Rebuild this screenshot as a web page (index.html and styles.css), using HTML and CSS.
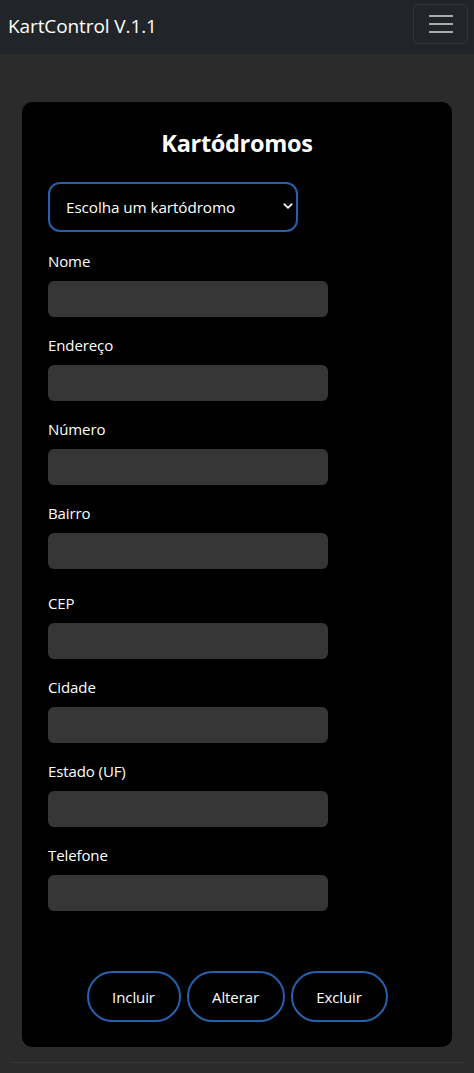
FILE: index.html
```html
<!DOCTYPE html>
<html lang="pt-BR">
<head>
<meta charset="utf-8">
<title>KartControl</title>
<link rel="stylesheet" href="styles.css">
</head>
<body>
<nav class="navbar">
  <span class="brand">KartControl V.1.1</span>
  <button class="toggler" type="button" aria-label="Menu">
    <span class="bar"></span><span class="bar"></span><span class="bar"></span>
  </button>
</nav>
<main class="page">
  <section class="card">
    <h1 class="title">Kartódromos</h1>
    <div class="select-wrap">
      <select class="select"><option>Escolha um kartódromo</option></select>
      <svg class="chevron" width="10" height="10" viewBox="0 0 16 16"><path d="M2 5l6 6 6-6" fill="none" stroke="#fff" stroke-width="2.6" stroke-linecap="round" stroke-linejoin="round"/></svg>
    </div>
    <form class="form">
      <div class="field"><label class="label">Nome</label><input class="input" type="text"></div>
      <div class="field"><label class="label">Endereço</label><input class="input" type="text"></div>
      <div class="field"><label class="label">Número</label><input class="input" type="text"></div>
      <div class="field"><label class="label">Bairro</label><input class="input" type="text"></div>
      <div class="field field-gap"><label class="label">CEP</label><input class="input" type="text"></div>
      <div class="field"><label class="label">Cidade</label><input class="input" type="text"></div>
      <div class="field"><label class="label">Estado (UF)</label><input class="input" type="text"></div>
      <div class="field"><label class="label">Telefone</label><input class="input" type="text"></div>
    </form>
    <div class="actions">
      <button class="btn btn-inc" type="button">Incluir</button>
      <button class="btn btn-alt" type="button">Alterar</button>
      <button class="btn btn-exc" type="button">Excluir</button>
    </div>
  </section>
  <div class="footer-line"></div>
</main>
</body>
</html>
```

FILE: styles.css
```css
* { box-sizing: border-box; }
html, body { margin: 0; padding: 0; }
body {
  background: #2b2b2b;
  color: #fff;
  font-family: "Open Sans", "Noto Sans", sans-serif;
  font-size: 15px;
  width: 474px;
  min-height: 1073px;
  overflow: hidden;
}
.navbar {
  height: 54px;
  background: #212529;
  display: flex;
  align-items: center;
  justify-content: space-between;
  padding: 0 6px 0 8px;
}
.brand {
  font-size: 19px;
  color: #fff;
  letter-spacing: -0.1px;
  padding-bottom: 2px;
}
.toggler {
  width: 55px;
  height: 40px;
  margin-top: -7px;
  background: transparent;
  border: 1px solid rgba(255,255,255,0.08);
  border-radius: 6px;
  display: flex;
  flex-direction: column;
  align-items: center;
  justify-content: center;
  gap: 6px;
  padding: 0;
}
.bar {
  display: block;
  width: 24px;
  height: 2px;
  background: #a9a9a9;
}
.page {
  padding: 48px 22px 0 22px;
}
.card {
  background: #000;
  border-radius: 10px;
  padding: 24px 26px 25px 26px;
  height: 945px;
  display: flex;
  flex-direction: column;
}
.title {
  margin: 0;
  text-align: center;
  font-size: 23.5px;
  font-weight: 700;
  line-height: 34px;
  letter-spacing: -0.3px;
}
.select-wrap {
  position: relative;
  width: 250px;
  margin-top: 22px;
}
.select {
  appearance: none;
  -webkit-appearance: none;
  width: 250px;
  height: 50px;
  background: #000;
  color: #fff;
  border: 2px solid #2760ab;
  border-radius: 12px;
  padding: 0 0 0 16px;
  font-family: inherit;
  font-size: 15.3px;
  letter-spacing: -0.1px;
  outline: none;
}
.chevron {
  position: absolute;
  right: 5px;
  top: 19px;
}
.form {
  margin-top: 17px;
  display: flex;
  flex-direction: column;
  gap: 16px;
}
.field {
  display: flex;
  flex-direction: column;
  gap: 8px;
}
.field-gap { margin-top: 6px; }
.label {
  font-size: 15px;
  line-height: 24px;
  color: #fff;
  letter-spacing: -0.1px;
}
.input {
  width: 280px;
  height: 36px;
  background: #363636;
  border: none;
  border-radius: 6px;
  outline: none;
}
.actions {
  margin-top: auto;
  display: flex;
  justify-content: center;
  gap: 6px;
}
.btn {
  height: 51px;
  border: 2px solid #2760ab;
  border-radius: 26px;
  background: #000;
  color: #fff;
  font-family: inherit;
  font-size: 15px;
  letter-spacing: -0.1px;
  padding: 0;
}
.btn-inc { width: 94px; }
.btn-alt { width: 98px; }
.btn-exc { width: 97px; }
.footer-line {
  height: 1px;
  background: #383838;
  margin: 15px -12px 0 -12px;
}
```
